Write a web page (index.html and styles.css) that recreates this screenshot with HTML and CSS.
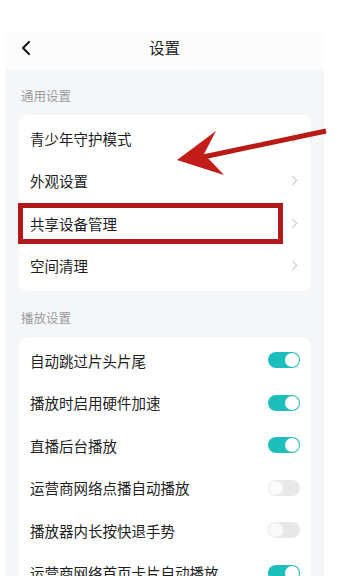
FILE: index.html
```html
<!DOCTYPE html>
<html lang="zh">
<head>
<meta charset="utf-8">
<link rel="stylesheet" href="styles.css">
</head>
<body>
<div class="phone">
  <div class="header">
    <svg class="back" width="12" height="16" viewBox="0 0 12 16"><path d="M9 2 L3 8 L9 14" fill="none" stroke="#1a1a1a" stroke-width="2.2" stroke-linecap="round" stroke-linejoin="round"/></svg>
    <div class="title">设置</div>
  </div>
  <div class="panel">
    <div class="sec-title first">通用设置</div>
    <div class="card card1">
      <div class="row"><span>青少年守护模式</span><i class="chev"></i></div>
      <div class="row"><span>外观设置</span><i class="chev"></i></div>
      <div class="row"><span>共享设备管理</span><i class="chev"></i></div>
      <div class="row"><span>空间清理</span><i class="chev"></i></div>
    </div>
    <div class="sec-title">播放设置</div>
    <div class="card card2">
      <div class="row"><span>自动跳过片头片尾</span><i class="tg on"></i></div>
      <div class="row"><span>播放时启用硬件加速</span><i class="tg on"></i></div>
      <div class="row"><span>直播后台播放</span><i class="tg on"></i></div>
      <div class="row"><span>运营商网络点播自动播放</span><i class="tg"></i></div>
      <div class="row"><span>播放器内长按快退手势</span><i class="tg"></i></div>
      <div class="row"><span>运营商网络首页卡片自动播放</span><i class="tg on"></i></div>
    </div>
  </div>
</div>
<div class="mark-box"></div>
<svg class="arrow" width="343" height="576" viewBox="0 0 343 576">
  <line x1="203" y1="157" x2="326" y2="131" stroke="#b81a16" stroke-width="5"/>
  <polygon points="177,160 216,131 204,154 224,175 " fill="#c21d18"/>
</svg>
</body>
</html>
```
FILE: styles.css
```css
html, body {
  margin: 0;
  padding: 0;
  background: #ffffff;
  font-family: "Noto Sans CJK SC", "Noto Sans", sans-serif;
  color: #222;
}
body {
  width: 343px;
  height: 576px;
  overflow: hidden;
  position: relative;
}
.phone {
  margin-left: 5px;
  width: 319px;
  padding-top: 32px;
}
.header {
  height: 38px;
  background: #fcfcfc;
  display: flex;
  align-items: flex-start;
  justify-content: center;
  position: relative;
}
.back {
  position: absolute;
  left: 15px;
  top: 8px;
}
.title {
  font-size: 15.5px;
  line-height: 20px;
  padding-top: 5px;
  color: #222;
}
.panel {
  background: #f5f6f8;
  padding: 0 13px 0 14px;
  height: 520px;
}
.sec-title {
  font-size: 12.5px;
  line-height: 18px;
  color: #9a9a9a;
  padding: 18px 0 11px 2px;
}
.sec-title.first {
  padding: 17px 0 10px 2px;
}
.card {
  background: #fff;
  border-radius: 8px;
}
.card1 {
  padding: 2px 0 4px;
}
.card2 {
  padding: 1px 0 0;
}
.row {
  height: 42.5px;
  display: flex;
  align-items: center;
  justify-content: space-between;
  padding: 0 11px 0 11px;
  font-size: 14.5px;
  color: #1e1e1e;
}
.chev {
  width: 6px;
  height: 6px;
  border-top: 1.4px solid #c8c8c8;
  border-right: 1.4px solid #c8c8c8;
  transform: rotate(45deg);
  margin-right: 4px;
}
.tg {
  width: 32px;
  height: 16px;
  border-radius: 8px;
  background: #e8e8e8;
  position: relative;
}
.tg::after {
  content: "";
  position: absolute;
  top: 1px;
  left: 1px;
  width: 14px;
  height: 14px;
  border-radius: 50%;
  background: #fafafa;
}
.tg.on {
  background: #1cbfbb;
}
.tg.on::after {
  left: 17px;
  background: #fff;
}
.mark-box {
  position: absolute;
  left: 18px;
  top: 203px;
  width: 255px;
  height: 31px;
  border: 5px solid #b3191b;
}
.arrow {
  position: absolute;
  left: 0;
  top: 0;
}
```
